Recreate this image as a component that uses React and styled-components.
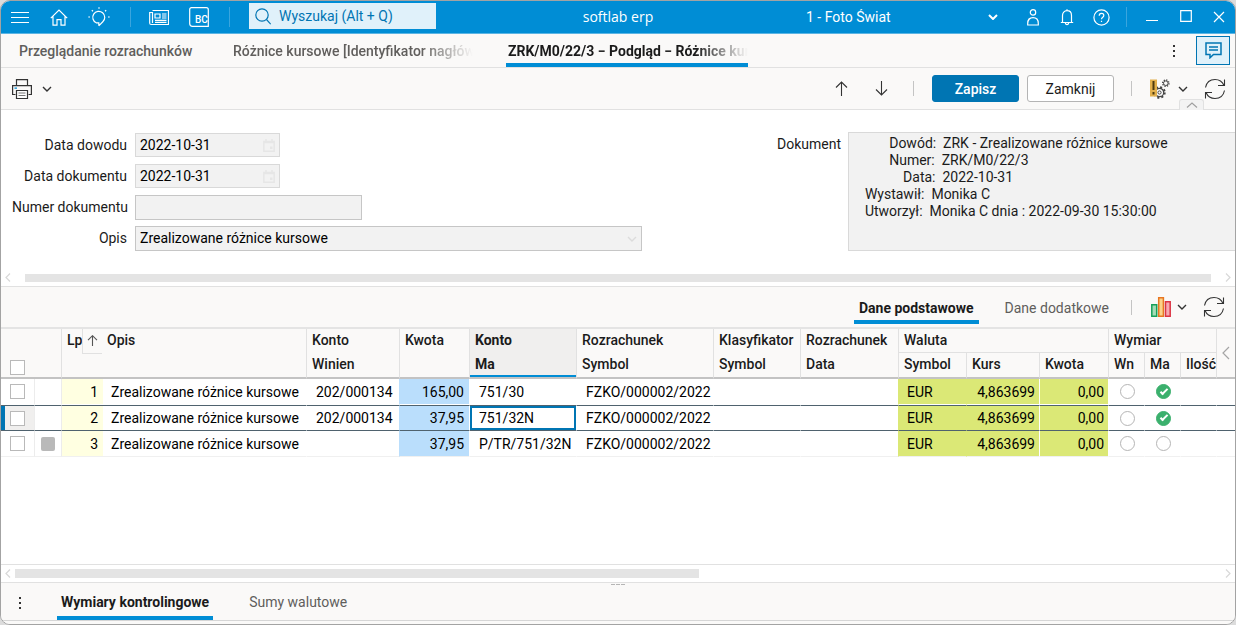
import React from "react";
import styled, { createGlobalStyle, css } from "styled-components";

const c = {
  blue: "#008dd5",
  deep: "#0075b3",
  pale: "#e0f1fa",
  bar: "#faf9f8",
  line: "#e1e1e1",
  field: "#f2f2f2",
  text: "#1b1b1b",
  icon: "#333",
  muted: "#605e5c",
};

const GlobalStyle = createGlobalStyle`
  *, *::before, *::after { box-sizing: border-box; }
  body { margin: 0; background: #dcdcdc; }
  body, button, input, select, textarea {
    font-family: Roboto, "Liberation Sans", sans-serif;
    font-size: 14px;
    color: ${c.text};
  }
  svg { display: block; flex: none; }
`;

const Window = styled.div`
  min-height: 100vh;
  display: flex;
  flex-direction: column;
  border: 1px solid #a3a3a3;
  border-radius: 10px;
  overflow: hidden;
  background: #fff;
`;

/* ---------- title bar ---------- */

const IconButton = styled.button`
  display: flex;
  align-items: center;
  justify-content: center;
  align-self: center;
  width: ${(p) => p.$w || 40}px;
  height: 30px;
  padding: 0 ${(p) => p.$after || 0}px 0 0;
  border: 0;
  background: none;
  color: ${c.icon};
  flex: none;
`;

const TitleBar = styled.header`
  display: grid;
  grid-template-columns: 1fr auto 1fr;
  align-items: center;
  height: 33px;
  background: ${c.blue};
  border-bottom: 1px solid #5bb5e4;
  color: #fff;
  ${IconButton} { color: #fff; }
`;

const TitleSide = styled.div`
  display: flex;
  align-items: center;
  height: 32px;
  justify-content: ${(p) => (p.$end ? "flex-end" : "flex-start")};
`;

const TitleRule = styled.span`
  width: 1px;
  height: 20px;
  background: #3aa5de;
`;

const SearchBox = styled.label`
  display: flex;
  align-items: center;
  gap: 8px;
  width: 187px;
  height: 26px;
  margin: 0 0 2px 12px;
  padding-left: 6px;
  background: ${c.pale};
  color: ${c.deep};
`;

const SearchInput = styled.input`
  flex: 1;
  min-width: 0;
  padding: 0;
  border: 0;
  outline: 0;
  background: none;
  &::placeholder { color: ${c.deep}; opacity: 1; }
`;

const AppName = styled.h1`
  margin: 0;
  font: 500 14px/20px "Open Sans", sans-serif;
`;

const CompanyWrap = styled.label`
  display: flex;
  align-items: center;
  width: 192px;
  margin-right: 18px;
`;

const CompanySelect = styled.select`
  flex: 1;
  appearance: none;
  padding: 0;
  border: 0;
  background: none;
  color: #fff;
`;

/* ---------- document tabs ---------- */

const DocTabs = styled.nav`
  display: flex;
  align-items: stretch;
  gap: 33px;
  height: 34px;
  padding: 0 5px 0 16px;
  background: ${c.bar};
  border-bottom: 1px solid ${c.line};
`;

const DocTab = styled.button`
  width: ${(p) => (p.$wide ? 242 : 181)}px;
  padding: 1px 0 0 2px;
  border: 0;
  border-bottom: 4px solid ${(p) => (p.$active ? c.blue : "transparent")};
  border-top: 4px solid transparent;
  background: none;
  text-align: left;
  font-weight: ${(p) => (p.$active ? 700 : 500)};
  color: ${(p) => (p.$active ? c.text : c.muted)};
`;

const DocTabText = styled.span`
  display: block;
  overflow: hidden;
  white-space: nowrap;
  line-height: 20px;
  ${(p) => p.$fade && css`mask-image: linear-gradient(to right, #000 78%, transparent 100%);`}
`;

const DocTabTools = styled.div`
  display: flex;
  align-items: center;
  gap: 10px;
  margin-left: auto;
`;

const ChatButton = styled.button`
  display: flex;
  align-items: center;
  justify-content: center;
  width: 34px;
  height: 29px;
  padding: 0;
  border: 1px solid ${c.deep};
  background: ${c.pale};
  color: ${c.deep};
`;

/* ---------- toolbar ---------- */

const Toolbar = styled.div`
  position: relative;
  display: flex;
  align-items: center;
  height: 42px;
  padding: 0 9px 0 11px;
  background: ${c.bar};
  border-bottom: 1px solid ${c.line};
`;

const ToolGroup = styled.div`
  display: flex;
  align-items: center;
  margin-left: ${(p) => (p.$end ? "auto" : "0")};
`;

const ToolRule = styled.span`
  width: 1px;
  height: 15px;
  margin: 0 18px 0 ${(p) => (p.$tight ? 12 : 17)}px;
  background: #c4c4c4;
`;

const ActionButton = styled.button`
  width: 87px;
  height: 27px;
  padding: 0;
  border: 1px solid ${(p) => (p.$primary ? c.deep : "#b4b4b4")};
  border-radius: 3px;
  background: ${(p) => (p.$primary ? c.deep : "#fff")};
  color: ${(p) => (p.$primary ? "#fff" : c.text)};
  font-weight: ${(p) => (p.$primary ? 500 : 400)};
  & + & { margin-left: 8px; }
`;

const CollapseTab = styled.button`
  position: absolute;
  right: 31px;
  bottom: -1px;
  display: flex;
  align-items: center;
  justify-content: center;
  width: 25px;
  height: 11px;
  padding: 0;
  border: 1px solid ${c.line};
  border-bottom: 0;
  border-radius: 3px 3px 0 0;
  background: #f3f3f3;
  color: #a0a0a0;
`;

/* ---------- document form ---------- */

const FormPane = styled.section`
  display: flex;
  flex-direction: column;
  border-bottom: 1px solid ${c.line};
`;

const FormBody = styled.div`
  display: flex;
  justify-content: space-between;
  gap: 24px;
  padding: 22px 0 18px 11px;
`;

const Fields = styled.div`
  display: grid;
  grid-template-columns: 115px minmax(0, 507px);
  grid-auto-rows: 25px;
  column-gap: 8px;
  row-gap: 6px;
  align-items: start;
  padding-top: 1px;
  flex: 0 1 630px;
`;

const FieldLabel = styled.label`
  text-align: right;
  white-space: nowrap;
  line-height: 25px;
`;

const FieldBox = styled.div`
  display: flex;
  align-items: center;
  width: ${(p) => p.$width || "100%"};
  height: ${(p) => (p.$soft ? 24 : 25)}px;
  padding-right: 4px;
  border: 1px solid ${(p) => (p.$soft ? "#d9d9d9" : "#c6c6c6")};
  background: ${c.field};
  color: #dcdcdc;
`;

const controlText = css`
  flex: 1;
  min-width: 0;
  padding: 0 4px 1px;
  border: 0;
  outline: 0;
  background: none;
  color: #000;
  opacity: 1;
`;

const FieldInput = styled.input`${controlText}`;
const FieldSelect = styled.select`${controlText} appearance: none;`;

const DocumentArea = styled.div`
  display: flex;
  gap: 7px;
`;

const DocumentInfo = styled.textarea`
  width: 387px;
  height: 119px;
  padding: 2px;
  border: 1px solid #d9d9d9;
  border-right: 0;
  outline: 0;
  resize: none;
  overflow: hidden;
  background: ${c.field};
  line-height: 17px;
  white-space: pre;
`;

/* ---------- scroll bars ---------- */

const ScrollRow = styled.div`
  display: flex;
  align-items: center;
  gap: ${(p) => p.$gap}px;
  height: 17px;
  padding: 0 4px;
  color: #d8d8d8;
  background: #fff;
`;

const ScrollTrack = styled.div`
  flex: 1;
`;

const ScrollThumb = styled.div`
  height: ${(p) => (p.$thick ? 9 : 8)}px;
  background: #e4e4e4;
`;

/* ---------- rows panel ---------- */

const PanelBar = styled.div`
  display: flex;
  justify-content: flex-end;
  align-items: stretch;
  height: 42px;
  padding-right: 10px;
  background: ${c.bar};
  border-bottom: 2px solid #e4e4e4;
`;

const TabList = styled.div`
  display: flex;
  gap: 21px;
`;

const PanelTab = styled.button`
  padding: ${(p) => (p.$lift ? 8 : 3)}px ${(p) => (p.$lift ? 5 : 4)}px 0;
  margin-bottom: ${(p) => (p.$lift ? 3 : 0)}px;
  border: 0;
  border-bottom: 4px solid ${(p) => (p.$active ? c.blue : "transparent")};
  background: none;
  font-weight: ${(p) => (p.$active ? 700 : 400)};
  color: ${(p) => (p.$active ? c.text : c.muted)};
`;

const GridPane = styled.section`
  flex: 1;
  overflow: hidden;
  border-bottom: 1px solid ${c.line};
`;

const Grid = styled.table`
  width: 100%;
  table-layout: fixed;
  border-collapse: separate;
  border-spacing: 0;
`;

const Th = styled.th`
  height: ${(p) => (p.$group ? 24 : 26)}px;
  padding: 0 0 0 ${(p) => (p.$flush ? 4 : 5)}px;
  border-left: ${(p) => (p.$flush ? 0 : 1)}px solid ${c.line};
  border-bottom: ${(p) => (p.$group ? "1px solid #e1e1e1" : "2px solid #c3c3c3")};
  background: ${(p) => (p.$active ? "#f0efee" : c.bar)};
  ${(p) => p.$active && css`box-shadow: inset 0 -2px ${c.blue};`}
  text-align: left;
  vertical-align: ${(p) => (p.$low ? "bottom" : "top")};
  font-weight: ${(p) => (p.$active ? 700 : 500)};
  line-height: 22px;
  white-space: nowrap;
  overflow: hidden;
`;

const HeadLine = styled.span`
  display: block;
  & + & { margin-top: 2px; }
`;

const TickSlot = styled.div`
  padding-left: 5px;
`;

const SortHead = styled.div`
  display: flex;
  justify-content: space-between;
  padding-right: 1px;
`;

const SortMark = styled.span`
  display: flex;
  align-items: center;
  justify-content: center;
  width: 20px;
  height: 25px;
  border: solid ${c.line};
  border-width: 0 0 1px 1px;
  color: #555;
`;

const CollapseHead = styled.button`
  display: flex;
  align-items: center;
  height: 48px;
  padding: 0;
  border: 0;
  background: none;
  color: #a5a5a5;
`;

const tints = { blue: "#badefc", green: "#dbe876", yellow: "#ffffe1", none: "transparent" };

const Td = styled.td`
  height: 26px;
  padding: 0 ${(p) => p.$right ?? 5}px 0 ${(p) => p.$left ?? (p.$flush ? 8 : 9)}px;
  border-left: ${(p) => (p.$flush ? 0 : 1)}px solid ${(p) => p.$edge || "transparent"};
  background: ${(p) => tints[p.$tint || "none"]};
  text-align: ${(p) => (p.$num ? "right" : "left")};
  color: #000;
  white-space: nowrap;
`;

const Row = styled.tr`
  ${Td} { border-bottom: 1px solid ${(p) => (p.$before ? "#fff" : "#f0f0f0")}; }
  ${(p) =>
    p.$current &&
    css`
      ${Td} {
        border-top: 1px solid #4f626e;
        border-bottom: 1px solid #4f626e;
      }
      ${Td}:first-child {
        background: #f0efee;
        box-shadow: inset 4px 0 ${c.deep};
      }
    `}
`;

const FocusTd = styled(Td)`
  box-shadow: ${(p) => (p.$focus ? `inset 0 0 0 2px ${c.deep}` : "none")};
`;

const Tick = styled.input`
  display: block;
  appearance: none;
  width: 15px;
  height: 15px;
  margin: ${(p) => (p.$head ? "0 0 2px" : "0")};
  border: 1px solid #b9b9b9;
  background: #fff;
`;

const RoundTick = styled.input`
  display: grid;
  place-items: center;
  appearance: none;
  width: 15px;
  height: 15px;
  margin: 0;
  border: 1px solid #b5b5b5;
  border-radius: 50%;
  background: #fff;
  &:checked { border-color: #3bb06d; background: #3bb06d; }
  &:checked::after {
    content: "";
    width: 8px;
    height: 4px;
    margin-bottom: 2px;
    border: solid #fff;
    border-width: 0 0 2px 2px;
    transform: rotate(-45deg);
  }
`;

const RowMark = styled.span`
  display: block;
  width: 14px;
  height: 14px;
  border-radius: 2px;
  background: #b9b9b9;
`;

/* ---------- bottom panel ---------- */

const Splitter = styled.div`
  display: flex;
  justify-content: center;
  gap: 1px;
  height: 3px;
  padding-top: 1px;
  border-top: 1px solid ${c.line};
  background: ${c.bar};
`;

const SplitterDash = styled.span`
  width: 4px;
  height: 1px;
  background: #b5b5b5;
`;

const BottomBar = styled.footer`
  display: flex;
  align-items: stretch;
  height: 36px;
  padding-left: 4px;
  background: ${c.bar};
  border-bottom: 1px solid #d6d6d6;
`;

const BottomTabs = styled.div`
  display: flex;
  gap: 32px;
  padding-left: 22px;
`;

const BottomEdge = styled.div`
  height: 3px;
  background: ${c.bar};
`;

/* ---------- icons ---------- */

const Svg = ({ w, h, sw = 1.2, children }) => (
  <svg width={w} height={h} viewBox={`0 0 ${w} ${h}`} fill="none" stroke="currentColor" strokeWidth={sw} aria-hidden="true">
    {children}
  </svg>
);

const MenuIcon = () => <Svg w={18} h={13} sw={1}><path d="M0 1.5h18M0 6.5h18M0 11.5h18" /></Svg>;
const HomeIcon = () => <Svg w={18} h={17}><path d="M.8 9.2 9 1l8.2 8.2M3 7.2v9h4v-5.5h4v5.5h4v-9" /></Svg>;
const IdeaIcon = () => (
  <Svg w={22} h={20}>
    <path d="M7.8 15A6 6 0 1 1 14.200 15L11.500 18.500v-2.500z" stroke="none" />
    <path d="M10.800 18.800v-3H8.200A6 6 0 1 1 14.800 14.800L10.800 18.800" />
    <path d="M11 .3v1.500M3.800 3.200l1.200 1.100M18.200 3.200l-1.200 1.100M.3 10h1.700M20 10h1.700" />
  </Svg>
);
const NewsIcon = () => (
  <Svg w={20} h={17}>
    <path d="M3.500 1.500h16v14H2.200Q.7 15.500.7 14V3.500h2.800V14" />
    <path d="M6 5h5v4H6zM13 5h4.500M13 7h4.500M13 9h4.500M6 11.300h11.500M6 13.300h11.500" />
  </Svg>
);
const BcIcon = () => (
  <svg width="20" height="20" viewBox="0 0 20 20" fill="none" aria-hidden="true">
    <path d="M2.500.7h14.800q2 0 2 2v16.600H3.500q-2.800 0-2.800-2.800V2.500Q.7.700 2.500.7z" stroke="#fff" strokeWidth="1.200" />
    <text x="6" y="16" fill="#fff" fontFamily="Roboto, sans-serif" fontSize="10" fontWeight="500">BC</text>
  </svg>
);
const SearchIcon = () => <Svg w={16} h={17}><circle cx="7" cy="7" r="6.2" /><path d="M11.500 11.500l4.200 4.700" /></Svg>;
const Chevron = ({ w = 10, sw = 1.4 }) => <Svg w={w} h={6} sw={sw}><path d={`M1 1l${w / 2 - 1} 4 ${w / 2 - 1}-4`} /></Svg>;
const UserIcon = () => <Svg w={12} h={17}><circle cx="6" cy="3.400" r="2.700" /><path d="M.7 16V14.500C.7 11 2.800 8.700 6 8.700s5.300 2.300 5.300 5.800V16z" /></Svg>;
const BellIcon = () => (
  <Svg w={14} h={17}>
    <path d="M7 .3v1.400M.8 13.500h12.400M2.500 13.500V6.500C2.500 3.700 4.300 1.700 7 1.700s4.500 2 4.500 4.800v7M5.300 14q.4 1.700 1.700 1.700T8.700 14" />
  </Svg>
);
const HelpIcon = () => (
  <Svg w={17} h={17}>
    <circle cx="8.500" cy="8.500" r="7.600" />
    <path d="M6.200 6.800c0-1.500 1-2.400 2.300-2.400s2.300.8 2.300 2c0 1.800-2.300 1.900-2.300 3.900M8.500 11.700v1.400" />
  </Svg>
);
const MinIcon = () => <Svg w={12} h={12} sw={1}><path d="M0 9.500h12" /></Svg>;
const MaxIcon = () => <Svg w={12} h={14}><path d="M.7.700h10.600v10.600H.7z" /></Svg>;
const CloseIcon = () => <Svg w={12} h={13}><path d="M1 1l10 10M11 1L1 11" /></Svg>;
const DotsIcon = () => <Svg w={4} h={14}><path d="M1 1h2v2H1zM1 6h2v2H1zM1 11h2v2H1z" fill="#333" stroke="none" /></Svg>;
const ChatIcon = () => (
  <Svg w={17} h={17} sw={1.5}><path d="M1 1h15v11.500H8.500L5 15.800v-3.300H1zM4 5h9M4 8h9" /></Svg>
);
const PrintIcon = () => (
  <svg width="20" height="20" viewBox="0 0 20 20" fill="none" stroke="#333" strokeWidth="1.200" aria-hidden="true">
    <path d="M4.500 7V.6h11V7M3.500 15.500H.6V6.600h18.800v8.900h-2.900" />
    <path d="M4.500 11.500h11v8h-11z" fill="#fff" />
    <path d="M6.500 14h7M6.500 16.500h7" stroke="#777" />
    <path d="M2.500 9.200h2.500" stroke={c.blue} />
  </svg>
);
const Arrow = ({ down, small }) => (
  <Svg w={small ? 11 : 13} h={small ? 12 : 15} sw={1.1}>
    {small
      ? <path d="M5.500 11V0.700M1 5.200L5.500.7 10 5.200" />
      : down
      ? <path d="M6.500 0v14M1 8.500L6.500 14 12 8.500" />
      : <path d="M6.500 15V1M1 6.500L6.500 1 12 6.500" />}
  </Svg>
);
const GearsIcon = () => (
  <svg width="20" height="20" viewBox="0 0 20 20" fill="none" stroke="#444" aria-hidden="true">
    <circle cx="9.500" cy="13.500" r="4.200" strokeWidth="1.200" />
    <circle cx="9.500" cy="13.500" r="5.400" strokeWidth="1.600" strokeDasharray="2.100 2.140" />
    <circle cx="9.500" cy="13.500" r="1.600" />
    <circle cx="15.800" cy="4.200" r="2.300" strokeWidth="1" />
    <circle cx="15.800" cy="4.200" r="3.200" strokeWidth="1.300" strokeDasharray="1.250 1.260" />
    <path d="M0 .5h7v17H0z" fill="#e2b04c" stroke="none" />
    <path d="M3.500 2v9M3.500 13v2.500" stroke="#4d3a10" strokeWidth="2" />
  </svg>
);
const RefreshIcon = () => (
  <Svg w={22} h={22} sw={1.1}>
    <path d="M1.500 9.500C2.500 4.500 6.200 1.500 11 1.500c4 0 7.300 2 9 6M20.500 1.500V7.500H14" />
    <path d="M20.500 12.500c-1 5-4.700 8-9.500 8-4 0-7.300-2-9-6M1.500 20.500v-6H8" />
  </Svg>
);
const ChartIcon = () => (
  <svg width="20" height="20" viewBox="0 0 20 20" aria-hidden="true">
    <path d="M.8 7.800h4.900v11.400H.8z" fill="#a5dcb6" stroke="#17a05a" strokeWidth="1.500" />
    <path d="M7.700.800h4.700v18.400H7.700z" fill="#fbd38a" stroke="#e87722" strokeWidth="1.500" />
    <path d="M14.500 4.800h4.700v14.400h-4.700z" fill="#f7a9b0" stroke="#dc3545" strokeWidth="1.500" />
  </svg>
);
const CalendarIcon = () => (
  <svg width="12" height="13" viewBox="0 0 12 13" fill="none" stroke="#e6e6e6" strokeWidth="1.500" aria-hidden="true">
    <path d="M.8 2.500h10.400v9.700H.8zM1 3.500h10M3 0v2M9 0v2" /><path d="M7 7.500h2.500v2.500H7z" fill="#e6e6e6" stroke="none" />
  </svg>
);
const SideArrow = ({ right, large }) => (
  <Svg w={large ? 8 : 6} h={large ? 14 : 9}>
    {large ? <path d="M7 1L1 7l6 6" /> : right ? <path d="M1 .5l4 4-4 4" /> : <path d="M5 .5l-4 4 4 4" />}
  </Svg>
);

/* ---------- data ---------- */

const columns = [33, 27, 42, 203, 93, 70, 107, 137, 87, 98, 68, 73, 69, 36, 36, 36];

const rows = [
  { lp: 1, account: "202/000134", amount: "165,00", credit: "751/30", ma: true },
  { lp: 2, account: "202/000134", amount: "37,95", credit: "751/32N", ma: true, current: true },
  { lp: 3, account: "", amount: "37,95", credit: "P/TR/751/32N", ma: false, marked: true },
];

const documentInfo = [
  " ".repeat(11) + "Dowód:  ZRK - Zrealizowane różnice kursowe",
  " ".repeat(11) + "Numer:  ZRK/M0/22/3",
  " ".repeat(15) + "Data:  2022-10-31",
  " ".repeat(4) + "Wystawił:  Monika C",
  " ".repeat(4) + "Utworzył:  Monika C dnia : 2022-09-30 15:30:00",
].join("\n");

const HeadPair = ({ top, bottom, active }) => (
  <Th rowSpan={2} $active={active}>
    <HeadLine>{top}</HeadLine>
    <HeadLine>{bottom}</HeadLine>
  </Th>
);

const ScrollBar = ({ gap, share, thick }) => (
  <ScrollRow $gap={gap}>
    <SideArrow />
    <ScrollTrack>
      <ScrollThumb $thick={thick} style={{ width: `${share}%` }} />
    </ScrollTrack>
    <SideArrow right />
  </ScrollRow>
);

export default function App() {
  return (
    <>
      <GlobalStyle />
      <Window>
        <TitleBar>
          <TitleSide>
            <IconButton $w={38} aria-label="Menu"><MenuIcon /></IconButton>
            <IconButton aria-label="Start"><HomeIcon /></IconButton>
            <IconButton aria-label="Podpowiedzi"><IdeaIcon /></IconButton>
            <IconButton $w={23} as="span"><TitleRule /></IconButton>
            <IconButton $w={34} aria-label="Aktualności"><NewsIcon /></IconButton>
            <IconButton $w={46} aria-label="BC"><BcIcon /></IconButton>
            <IconButton $w={15} as="span"><TitleRule /></IconButton>
            <SearchBox>
              <SearchIcon />
              <SearchInput type="text" aria-label="Wyszukaj" placeholder="Wyszukaj (Alt + Q)" />
            </SearchBox>
          </TitleSide>
          <AppName>softlab erp</AppName>
          <TitleSide $end>
            <CompanyWrap>
              <CompanySelect aria-label="Firma"><option>1 - Foto Świat</option></CompanySelect>
              <Chevron sw={2} />
            </CompanyWrap>
            <IconButton $w={34} aria-label="Użytkownik"><UserIcon /></IconButton>
            <IconButton $w={34} aria-label="Powiadomienia"><BellIcon /></IconButton>
            <IconButton $w={34} aria-label="Pomoc"><HelpIcon /></IconButton>
            <IconButton $w={17} as="span"><TitleRule /></IconButton>
            <IconButton $w={34} aria-label="Minimalizuj"><MinIcon /></IconButton>
            <IconButton $w={34} aria-label="Maksymalizuj"><MaxIcon /></IconButton>
            <IconButton $w={32} aria-label="Zamknij okno"><CloseIcon /></IconButton>
          </TitleSide>
        </TitleBar>

        <DocTabs>
          <DocTab><DocTabText>Przeglądanie rozrachunków</DocTabText></DocTab>
          <DocTab $wide><DocTabText $fade>Różnice kursowe [Identyfikator nagłówka]</DocTabText></DocTab>
          <DocTab $wide $active><DocTabText $fade>ZRK/M0/22/3 − Podgląd − Różnice kursowe</DocTabText></DocTab>
          <DocTabTools>
            <IconButton $w={24} aria-label="Więcej kart"><DotsIcon /></IconButton>
            <ChatButton aria-label="Komentarze"><ChatIcon /></ChatButton>
          </DocTabTools>
        </DocTabs>

        <Toolbar>
          <ToolGroup>
            <IconButton $w={20} aria-label="Drukuj"><PrintIcon /></IconButton>
            <IconButton $w={30} aria-label="Opcje wydruku"><Chevron /></IconButton>
          </ToolGroup>
          <ToolGroup $end>
            <IconButton aria-label="Poprzedni"><Arrow /></IconButton>
            <IconButton aria-label="Następny"><Arrow down /></IconButton>
            <ToolRule $tight />
            <ActionButton $primary>Zapisz</ActionButton>
            <ActionButton>Zamknij</ActionButton>
            <ToolRule />
            <IconButton $w={20} aria-label="Ustawienia"><GearsIcon /></IconButton>
            <IconButton $w={34} $after={8} aria-label="Więcej ustawień"><Chevron /></IconButton>
            <IconButton $w={22} aria-label="Odśwież"><RefreshIcon /></IconButton>
          </ToolGroup>
          <CollapseTab aria-label="Zwiń">
            <Svg w={12} h={6}><path d="M1 5.500L6 1l5 4.500" /></Svg>
          </CollapseTab>
        </Toolbar>

        <FormPane>
          <FormBody>
            <Fields>
              <FieldLabel htmlFor="voucher-date">Data dowodu</FieldLabel>
              <FieldBox $width="145px" $soft>
                <FieldInput id="voucher-date" type="text" readOnly value="2022-10-31" />
                <CalendarIcon />
              </FieldBox>
              <FieldLabel htmlFor="document-date">Data dokumentu</FieldLabel>
              <FieldBox $width="145px" $soft>
                <FieldInput id="document-date" type="text" readOnly value="2022-10-31" />
                <CalendarIcon />
              </FieldBox>
              <FieldLabel htmlFor="document-number">Numer dokumentu</FieldLabel>
              <FieldBox $width="227px">
                <FieldInput id="document-number" type="text" readOnly value="" />
              </FieldBox>
              <FieldLabel htmlFor="description">Opis</FieldLabel>
              <FieldBox>
                <FieldSelect id="description" disabled defaultValue="z">
                  <option value="z">Zrealizowane różnice kursowe</option>
                </FieldSelect>
                <Chevron />
              </FieldBox>
            </Fields>
            <DocumentArea>
              <FieldLabel htmlFor="document-info">Dokument</FieldLabel>
              <DocumentInfo id="document-info" readOnly value={documentInfo} />
            </DocumentArea>
          </FormBody>
          <ScrollBar gap={14} share={100} />
        </FormPane>

        <PanelBar>
          <TabList role="tablist">
            <PanelTab role="tab" aria-selected="true" $active $lift>Dane podstawowe</PanelTab>
            <PanelTab role="tab" aria-selected="false" $lift>Dane dodatkowe</PanelTab>
          </TabList>
          <ToolGroup>
            <ToolRule />
            <IconButton $w={22} aria-label="Wykres"><ChartIcon /></IconButton>
            <IconButton $w={31} $after={12} aria-label="Opcje wykresu"><Chevron /></IconButton>
            <IconButton $w={22} aria-label="Odśwież wiersze"><RefreshIcon /></IconButton>
          </ToolGroup>
        </PanelBar>

        <GridPane>
          <Grid>
            <colgroup>
              {columns.map((w, i) => <col key={i} width={w} />)}
              <col />
            </colgroup>
            <thead>
              <tr>
                <Th rowSpan={2} $flush $low>
                  <TickSlot><Tick type="checkbox" $head aria-label="Zaznacz wszystkie" /></TickSlot>
                </Th>
                <Th rowSpan={2} $flush aria-label="Znacznik" />
                <Th rowSpan={2}>
                  <SortHead>Lp<SortMark><Arrow small /></SortMark></SortHead>
                </Th>
                <Th rowSpan={2} $flush>Opis</Th>
                <HeadPair top="Konto" bottom="Winien" />
                <Th rowSpan={2}>Kwota</Th>
                <HeadPair top="Konto" bottom="Ma" active />
                <HeadPair top="Rozrachunek" bottom="Symbol" />
                <HeadPair top="Klasyfikator" bottom="Symbol" />
                <HeadPair top="Rozrachunek" bottom="Data" />
                <Th colSpan={3} $group>Waluta</Th>
                <Th colSpan={3} $group>Wymiar</Th>
                <Th rowSpan={2}>
                  <CollapseHead aria-label="Pokaż kolumny"><SideArrow large /></CollapseHead>
                </Th>
              </tr>
              <tr>
                <Th>Symbol</Th>
                <Th>Kurs</Th>
                <Th>Kwota</Th>
                <Th>Wn</Th>
                <Th>Ma</Th>
                <Th>Ilość</Th>
              </tr>
            </thead>
            <tbody>
              {rows.map((r) => (
                <Row key={r.lp} $current={r.current} $before={r.lp === 1}>
                  <Td $flush $left={9}><Tick type="checkbox" aria-label={`Zaznacz ${r.lp}`} /></Td>
                  <Td $left={6} $edge="#ececec">{r.marked && <RowMark />}</Td>
                  <Td $num $tint="yellow" $edge="#ececec">{r.lp}</Td>
                  <Td $flush>Zrealizowane różnice kursowe</Td>
                  <Td $right={0}>{r.account}</Td>
                  <Td $num $tint="blue">{r.amount}</Td>
                  <FocusTd $right={0} $focus={r.current}>{r.credit}</FocusTd>
                  <Td>FZKO/000002/2022</Td>
                  <Td />
                  <Td />
                  <Td $left={8} $tint="green">EUR</Td>
                  <Td $num $right={4} $tint="green">4,863699</Td>
                  <Td $num $right={4} $tint="green" $edge="#fff">0,00</Td>
                  <Td $left={11}><RoundTick type="checkbox" aria-label={`Wn ${r.lp}`} /></Td>
                  <Td $left={11}><RoundTick type="checkbox" defaultChecked={r.ma} aria-label={`Ma ${r.lp}`} /></Td>
                  <Td />
                  <Td />
                </Row>
              ))}
            </tbody>
          </Grid>
        </GridPane>
        <ScrollBar gap={4} share={56.7} thick />

        <Splitter><SplitterDash /><SplitterDash /><SplitterDash /></Splitter>
        <BottomBar>
          <IconButton $w={30} aria-label="Opcje panelu"><DotsIcon /></IconButton>
          <BottomTabs role="tablist">
            <PanelTab role="tab" aria-selected="true" $active>Wymiary kontrolingowe</PanelTab>
            <PanelTab role="tab" aria-selected="false">Sumy walutowe</PanelTab>
          </BottomTabs>
        </BottomBar>
        <BottomEdge />
      </Window>
    </>
  );
}
